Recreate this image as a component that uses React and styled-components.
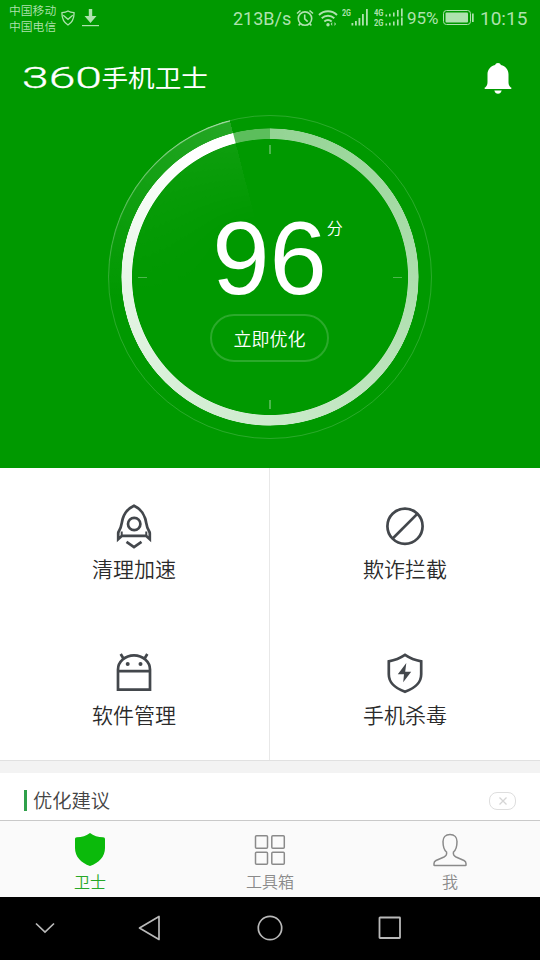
import styled, { createGlobalStyle } from "styled-components";

const GlobalStyle = createGlobalStyle`
  * {
    box-sizing: border-box;
  }

  body {
    margin: 0;
    background: #000;
    font-family: Roboto, "Noto Sans CJK SC", sans-serif;
  }

  svg {
    display: block;
  }
`;

const cjkLight = `"Noto Sans CJK SC DemiLight", "Noto Sans CJK SC", sans-serif`;

const Screen = styled.div`
  width: 540px;
  height: 960px;
  display: flex;
  flex-direction: column;
  overflow: hidden;
  background: #fff;
`;

const Hero = styled.section`
  height: 468px;
  flex-shrink: 0;
  background: #009900;
  color: #fff;
`;

const StatusBar = styled.div`
  height: 36px;
  display: flex;
  align-items: center;
  padding: 0 12px 0 9px;
  color: #aee2ae;
  white-space: nowrap;
`;

const Carriers = styled.div`
  width: 52px;
  font-family: ${cjkLight};
  font-size: 11.8px;
  font-weight: 350;
  line-height: 16px;
`;

const StatusIcon = styled.svg`
  flex-shrink: 0;
  margin-right: ${({ $gap }) => $gap || 0}px;
`;

const StatusText = styled.span`
  width: ${({ $width }) => $width}px;
  font-size: ${({ $size }) => $size}px;
  line-height: 20px;
  margin-left: ${({ $push }) => ($push ? "auto" : "0")};
  padding-top: ${({ $shift }) => $shift || 0}px;
`;

const Header = styled.header`
  height: 79px;
  display: flex;
  justify-content: space-between;
  padding: 18px 28px 0 22px;

  & svg:last-child {
    margin-top: 8px;
  }
`;

const Gauge = styled.div`
  width: 324px;
  height: 324px;
  margin: 0 auto;
  position: relative;
  display: flex;
  flex-direction: column;
  align-items: center;
`;

const GaugeLayer = styled.div`
  position: absolute;
  inset: 0;
  border-radius: 50%;
`;

const OuterLine = styled(GaugeLayer)`
  border: 1px solid rgba(255, 255, 255, 0.17);
`;

const OuterGlow = styled(GaugeLayer)`
  background: conic-gradient(
    transparent 265deg,
    rgba(255, 255, 255, 0.5) 345.6deg,
    transparent 345.6deg
  );
  mask: radial-gradient(circle, transparent 160px, #000 161px);
`;

const Sweep = styled(GaugeLayer)`
  background: conic-gradient(
    transparent 262deg,
    rgba(255, 255, 255, 0.14) 345.6deg,
    transparent 345.6deg
  );
  mask: radial-gradient(
    circle,
    transparent 60px,
    rgba(0, 0, 0, 0.4) 138px,
    #000 139px
  );
`;

const Ring = styled(GaugeLayer)`
  inset: 13px 13.5px 13px 12.5px;
  background: conic-gradient(
    rgba(255, 255, 255, 0.58),
    rgba(255, 255, 255, 0.68) 90deg,
    rgba(255, 255, 255, 0.8) 180deg,
    rgba(255, 255, 255, 0.9) 265deg,
    #fff 325deg,
    #fff 345.4deg,
    rgba(255, 255, 255, 0.36) 345.8deg
  );
  mask: radial-gradient(
    circle,
    transparent 137.6px,
    #000 138.4px,
    #000 148.2px,
    transparent 149px
  );
`;

const Ticks = styled.svg`
  position: absolute;
  inset: 0;
`;

const Score = styled.div`
  position: relative;
  margin: 94px 1px 0 0;
  height: 100px;
  line-height: 100px;
  font-family: "Liberation Sans", Arial, sans-serif;
  font-size: 103px;
`;

const ScoreUnit = styled.span`
  position: absolute;
  left: 100%;
  top: 9px;
  line-height: 18px;
  font-family: ${cjkLight};
  font-weight: 350;
  font-size: 16px;
`;

const OptimizeButton = styled.button`
  position: relative;
  margin: 5px 1px 0 0;
  width: 119px;
  height: 48px;
  padding: 0 0 1px;
  border: 2px solid rgba(255, 255, 255, 0.17);
  border-radius: 24px;
  background: transparent;
  color: #fff;
  font-family: ${cjkLight};
  font-weight: 350;
  font-size: 18px;
`;

const FeatureGrid = styled.section`
  height: 293px;
  flex-shrink: 0;
  display: grid;
  grid-template-columns: 270px 270px;
  grid-template-rows: 146px 146px;
  border-bottom: 1px solid #e1e1e1;
`;

const Feature = styled.div`
  display: flex;
  flex-direction: column;
  align-items: center;
  padding-top: 34px;
  color: #2b2b2b;
  font-family: ${cjkLight};
  font-size: 21px;
  font-weight: 350;
  line-height: 30px;

  &:nth-child(odd) {
    padding-right: 1px;
    border-right: 1px solid #e8e8e8;
  }

  & svg {
    margin-bottom: 1px;
  }
`;

const Divider = styled.div`
  height: 12px;
  flex-shrink: 0;
  background: #f3f3f3;
`;

const Suggestion = styled.section`
  height: 47px;
  flex-shrink: 0;
  display: flex;
  align-items: center;
  padding: 8px 24px 0;
`;

const SuggestionTitle = styled.h2`
  flex: 1;
  margin: 0;
  display: flex;
  align-items: center;
  font-family: ${cjkLight};
  font-size: 19.3px;
  font-weight: 350;
  line-height: 23px;
  color: #444;

  &:before {
    content: "";
    width: 3px;
    height: 21px;
    margin-right: 6px;
    background: #2fa04a;
  }
`;

const CloseButton = styled.button`
  width: 27px;
  height: 18px;
  padding: 0;
  display: flex;
  align-items: center;
  justify-content: center;
  border: 1px solid #dedede;
  border-radius: 8px;
  background: #fff;
`;

const TabBar = styled.nav`
  height: 77px;
  flex-shrink: 0;
  display: flex;
  border-top: 1px solid #c9c9c9;
  background: #fafafa;
`;

const Tab = styled.div`
  flex: 1;
  display: flex;
  flex-direction: column;
  align-items: center;
  padding-top: 11px;
  font-family: ${cjkLight};
  font-size: 16px;
  font-weight: ${({ $active }) => ($active ? 400 : 350)};
  line-height: 22px;
  color: ${({ $active }) => ($active ? "#27a827" : "#8a8a8a")};

  & svg {
    margin-bottom: 2px;
  }
`;

const SystemNav = styled.div`
  height: 63px;
  flex-shrink: 0;
  display: grid;
  grid-template-columns: 89px 120px 121px 119px;
  align-items: center;
  justify-items: center;
  padding-bottom: 1px;
  background: #000;
`;

function StatusShield() {
  return (
    <StatusIcon width="15" height="16" viewBox="0 0 15 16" fill="none" stroke="currentColor" strokeWidth="1.3" $gap={6}>
      <path d="M7 1C5 2.3 3 2.6 1 2.7c-.3 5.500 1.600 9.600 6 12.300 4.400-2.700 6.300-6.800 6-12.300C11 2.600 9 2.300 7 1z" />
      <path d="M2.200 5.300l4.800 4 4.800-4" />
    </StatusIcon>
  );
}

function DownloadIcon() {
  return (
    <StatusIcon width="17" height="18" viewBox="0 0 17 18" fill="currentColor">
      <path d="M6.800 0h3.400v7h4.300L8.500 14 2.500 7h4.300z" />
      <path d="M0 16h17v1.200H0z" />
    </StatusIcon>
  );
}

function AlarmIcon() {
  return (
    <StatusIcon width="18" height="18" viewBox="0 0 18 18" fill="none" stroke="currentColor" strokeWidth="1.6" $gap={4}>
      <circle cx="9" cy="9.600" r="6.700" />
      <path d="M8.700 5.500v4.300l3 2.900M1 4.500l3.500-3M17 4.500l-3.500-3M4.300 14.500L2.700 16.500M13.700 14.500l1.600 2" />
    </StatusIcon>
  );
}

function WifiIcon() {
  return (
    <StatusIcon width="20" height="17" viewBox="0 0 20 17" fill="none" stroke="currentColor" strokeWidth="1.900" $gap={4}>
      <path d="M1 5c5-5 13-5 18 0M3.700 8.300c3.700-3.400 8.900-3.400 12.600 0M6.300 11.500c2.200-1.900 5.200-1.900 7.400 0" />
      <circle cx="10" cy="14.800" r="1.700" fill="currentColor" stroke="none" />
      <path d="M14.200 12v4l-1.500-2zM16.500 12v4l1.500-2z" fill="currentColor" stroke="none" />
    </StatusIcon>
  );
}

function SignalIcon() {
  return (
    <StatusIcon width="28" height="20" viewBox="0 0 28 20" fill="currentColor" $gap={4}>
      <text x="0" y="8" textLength="9" lengthAdjust="spacingAndGlyphs" fontSize="9" fontWeight="700">2G</text>
      <path d="M9.500 15h1.800v2.500H9.500zM13 13h1.800v4.500H13zM16.500 10h1.800v7.500h-1.800zM20 6h1.800v11.500H20zM24 1h1.800v16.500H24z" />
    </StatusIcon>
  );
}

function DualSignalIcon() {
  return (
    <StatusIcon width="29" height="24" viewBox="0 -2 29 24" fill="currentColor" $gap={4}>
      <text x="0" y="8.300" textLength="9.500" lengthAdjust="spacingAndGlyphs" fontSize="8.500" fontWeight="700">4G</text>
      <text x="0" y="18" textLength="9.500" lengthAdjust="spacingAndGlyphs" fontSize="8.500" fontWeight="700">2G</text>
      <path d="M11.500 6.500h1.600V8.500h-1.600zM15 5.700h1.600v2.800H15zM19 4.500h1.600v4H19zM23 2h1.600v6.500H23zM27 .5h1.700v8H27z" />
      <path d="M11.500 15.500h1.600v2h-1.600zM15 14.700h1.600v2.800H15zM19 13.500h1.600v4H19zM23 11.500h1.600v6H23zM27 9.500h1.700v8H27z" />
    </StatusIcon>
  );
}

function BatteryIcon() {
  return (
    <StatusIcon width="31" height="16" viewBox="0 0 31 16" $gap={6}>
      <rect x=".5" y=".5" width="27" height="14" rx="3" fill="none" stroke="currentColor" />
      <rect x="2.500" y="2.500" width="22.500" height="10" rx="1" fill="currentColor" />
      <path d="M29 3.500h1.700v8.500H29z" fill="currentColor" />
    </StatusIcon>
  );
}

function Logo() {
  return (
    <svg width="190" height="50" viewBox="0 0 190 50" fill="#fff">
      <text x="0" y="34" textLength="80" lengthAdjust="spacingAndGlyphs" fontFamily="Roboto" fontSize="29.500" fontWeight="300" stroke="#fff" strokeWidth=".3">
        360
      </text>
      <text x="79.500" y="33" textLength="106.500" lengthAdjust="spacingAndGlyphs" fontFamily="Noto Sans CJK SC" fontSize="23.500" fontWeight="400">
        手机卫士
      </text>
    </svg>
  );
}

function BellIcon() {
  return (
    <svg width="28" height="33" viewBox="0 0 28 33" fill="#fff">
      <path d="M14 1c-1.500 0-2.600.8-2.900 2C6.300 4.200 3.500 8 3.500 12.500V20c0 2.300-.5 4-2.300 5.500H.7V27h26.600v-1.500h-.5C25 24 24.500 22.300 24.500 20v-7.500C24.500 8 21.700 4.200 16.900 3c-.3-1.200-1.400-2-2.900-2z" />
      <path d="M10.300 28.500h7.400c-.5 2-1.900 3.300-3.700 3.300s-3.200-1.300-3.700-3.300z" />
    </svg>
  );
}

function RocketIcon() {
  return (
    <svg width="40" height="50" viewBox="0 0 40 50" fill="none" stroke="#43474c" strokeWidth="2.700">
      <path d="M20 3.700C14 6.500 10.500 11 8.800 16.500c-1.200 4-1.200 8-3.300 11.500-.8 1.300-1.300 2-1.300 3.500v5.700l3.800-3.400h24l3.800 3.400v-5.700c0-1.500-.5-2.200-1.300-3.500-2.100-3.500-2.100-7.500-3.300-11.500C29.500 11 26 6.500 20 3.700z" />
      <path d="M7.700 29.500v5M32.300 29.500v5" strokeWidth="2" />
      <circle cx="20.200" cy="22" r="6.200" />
      <path d="M12.500 39.800l7.500 5.200 7.500-5.200" />
    </svg>
  );
}

function BlockIcon() {
  return (
    <svg width="40" height="50" viewBox="0 0 40 50" fill="none" stroke="#43474c" strokeWidth="2.700">
      <circle cx="20" cy="24.200" r="17.600" />
      <path d="M32.300 11.900L7.700 36.500" />
    </svg>
  );
}

function AndroidIcon() {
  return (
    <svg width="40" height="50" viewBox="0 0 40 50" fill="none" stroke="#43474c" strokeWidth="2.700">
      <path d="M4 41.700V21.500a16 14.200 0 0 1 32 0v20.200zM4 23.200h32" />
      <path d="M6.700 6l3 5M33.300 6l-3 5" />
      <circle cx="13.700" cy="16" r="2" fill="#43474c" stroke="none" />
      <circle cx="26.500" cy="16" r="2" fill="#43474c" stroke="none" />
    </svg>
  );
}

function ShieldIcon() {
  return (
    <svg width="40" height="50" viewBox="0 0 40 50" fill="none" stroke="#43474c" strokeWidth="2.700">
      <path d="M20 6.800c-5 3.300-10 5.300-16.200 6.500v13c0 9 6.200 13.700 16.200 17.500 10-3.800 16.200-8.500 16.200-17.500v-13C30 12.100 25 10.100 20 6.800z" />
      <path d="M21.300 15L12.800 26.200h6.200l-.8 8 8-10.500h-6z" fill="#43474c" stroke="none" />
    </svg>
  );
}

function GuardTabIcon() {
  return (
    <svg width="34" height="36" viewBox="0 0 34 36" fill="#0bba0b">
      <path d="M17 1c-3.200 2.800-8.500 4.200-13 4.200C2.500 5.200 2 6 2 7.200V16c0 8.500 6 15 15 18 9-3 15-9.500 15-18V7.200c0-1.200-.5-2-2-2C25.500 5.200 20.200 3.800 17 1z" />
    </svg>
  );
}

function ToolsTabIcon() {
  return (
    <svg width="34" height="36" viewBox="0 0 34 36" fill="none" stroke="#8a8a8a" strokeWidth="1.500">
      <rect x="2.500" y="3.700" width="12" height="12.500" rx="1" />
      <rect x="18.800" y="3.700" width="12.500" height="12.500" rx="1" />
      <rect x="2.500" y="20.300" width="12" height="12" rx="1" />
      <rect x="18.800" y="20.300" width="12.500" height="12" rx="1" />
    </svg>
  );
}

function MeTabIcon() {
  return (
    <svg width="34" height="36" viewBox="0 0 34 36" fill="none" stroke="#8a8a8a" strokeWidth="1.500">
      <path d="M17 2.500c-4.500 0-7 3-7 7 0 5 1 8.500 3.500 10.500.6 2.500-.2 3.800-2.500 5L3 28.500c-1.500.7-2 1.600-2 3V33c0 .4.200.6.600.6h30.800c.4 0 .6-.2.600-.6v-1.500c0-1.400-.5-2.300-2-3L23 25c-2.300-1.200-3.100-2.500-2.500-5C23 18 24 14.500 24 9.500c0-4-2.500-7-7-7z" />
    </svg>
  );
}

const features = [
  { label: "清理加速", Icon: RocketIcon },
  { label: "欺诈拦截", Icon: BlockIcon },
  { label: "软件管理", Icon: AndroidIcon },
  { label: "手机杀毒", Icon: ShieldIcon },
];

const tabs = [
  { label: "卫士", Icon: GuardTabIcon, active: true },
  { label: "工具箱", Icon: ToolsTabIcon },
  { label: "我", Icon: MeTabIcon },
];

export default function App() {
  return (
    <Screen>
      <GlobalStyle />
      <Hero>
        <StatusBar>
          <Carriers>
            <div>中国移动</div>
            <div>中国电信</div>
          </Carriers>
          <StatusShield />
          <DownloadIcon />
          <StatusText $size={18} $width={63} $shift={1} $push>
            213B/s
          </StatusText>
          <AlarmIcon />
          <WifiIcon />
          <SignalIcon />
          <DualSignalIcon />
          <StatusText $size={17} $width={36}>
            95%
          </StatusText>
          <BatteryIcon />
          <StatusText $size={19} $width={48} $shift={1}>
            10:15
          </StatusText>
        </StatusBar>
        <Header>
          <Logo />
          <BellIcon />
        </Header>
        <Gauge>
          <OuterLine />
          <Sweep />
          <OuterGlow />
          <Ring />
          <Ticks width="324" height="324" stroke="#fff" strokeOpacity=".3">
            <path d="M162 30v9M162 285v9" strokeWidth="2" />
            <path d="M30 162.500h9M285 162.500h9" />
          </Ticks>
          <Score>
            96
            <ScoreUnit>分</ScoreUnit>
          </Score>
          <OptimizeButton type="button">立即优化</OptimizeButton>
        </Gauge>
      </Hero>
      <FeatureGrid>
        {features.map(({ label, Icon }) => (
          <Feature key={label}>
            <Icon />
            {label}
          </Feature>
        ))}
      </FeatureGrid>
      <Divider />
      <Suggestion>
        <SuggestionTitle>优化建议</SuggestionTitle>
        <CloseButton type="button" aria-label="关闭">
          <svg width="8" height="8" viewBox="0 0 8 8" stroke="#d5d5d5" strokeWidth="1.300">
            <path d="M.5.5l7 7M7.500.5l-7 7" />
          </svg>
        </CloseButton>
      </Suggestion>
      <TabBar>
        {tabs.map(({ label, Icon, active }) => (
          <Tab key={label} $active={active}>
            <Icon />
            {label}
          </Tab>
        ))}
      </TabBar>
      <SystemNav>
        <svg width="20" height="12" viewBox="0 0 20 12" fill="none" stroke="#b9b9b9" strokeWidth="1.700">
          <path d="M1 1.500l9 8.500 9-8.500" />
        </svg>
        <svg width="24" height="26" viewBox="0 0 24 26" fill="none" stroke="#b9b9b9" strokeWidth="1.700" strokeLinejoin="round">
          <path d="M2.500 13L22 1.500v23z" />
        </svg>
        <svg width="26" height="26" viewBox="0 0 26 26" fill="none" stroke="#b9b9b9" strokeWidth="1.700">
          <circle cx="13" cy="13" r="11.700" />
        </svg>
        <svg width="24" height="24" viewBox="0 0 24 24" fill="none" stroke="#b9b9b9" strokeWidth="1.800">
          <rect x="1.500" y="1.500" width="20.500" height="20.500" rx=".5" />
        </svg>
      </SystemNav>
    </Screen>
  );
}
